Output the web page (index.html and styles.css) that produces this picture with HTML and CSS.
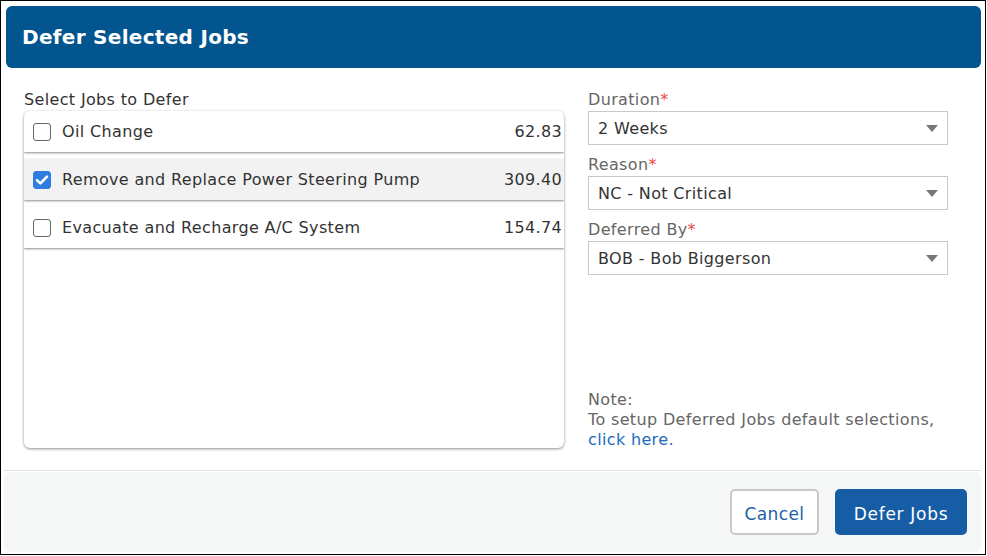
FILE: index.html
```html
<!DOCTYPE html>
<html>
<head>
<meta charset="utf-8">
<link rel="stylesheet" href="styles.css">
</head>
<body>
<div class="frame">
  <header class="dlg-header">
    <h1 class="dlg-title">Defer Selected Jobs</h1>
  </header>
  <main class="dlg-body">
    <section class="jobs-col">
      <div class="label">Select Jobs to Defer</div>
      <div class="jobs-card">
        <div class="job-row">
          <span class="cb"></span>
          <span class="job-name">Oil Change</span>
          <span class="job-amt">62.83</span>
        </div>
        <div class="job-row selected">
          <span class="cb checked">
            <svg viewBox="0 0 18 18" width="18" height="18"><path d="M4 9.2 L7.4 12.4 L14 5.6" fill="none" stroke="#fff" stroke-width="2.6" stroke-linecap="round" stroke-linejoin="round"/></svg>
          </span>
          <span class="job-name">Remove and Replace Power Steering Pump</span>
          <span class="job-amt">309.40</span>
        </div>
        <div class="job-row">
          <span class="cb"></span>
          <span class="job-name">Evacuate and Recharge A/C System</span>
          <span class="job-amt">154.74</span>
        </div>
      </div>
    </section>
    <section class="form-col">
      <div class="field">
        <div class="label">Duration<span class="req">*</span></div>
        <div class="select"><span>2 Weeks</span><span class="caret"></span></div>
      </div>
      <div class="field">
        <div class="label">Reason<span class="req">*</span></div>
        <div class="select"><span>NC - Not Critical</span><span class="caret"></span></div>
      </div>
      <div class="field">
        <div class="label">Deferred By<span class="req">*</span></div>
        <div class="select"><span>BOB - Bob Biggerson</span><span class="caret"></span></div>
      </div>
      <div class="note">
        Note:<br>
        To setup Deferred Jobs default selections,<br>
        <a class="link" href="#">click here.</a>
      </div>
    </section>
  </main>
  <footer class="dlg-footer">
    <div class="footer-inner">
      <button class="btn btn-cancel">Cancel</button>
      <button class="btn btn-primary">Defer Jobs</button>
    </div>
  </footer>
</div>
</body>
</html>
```

FILE: styles.css
```css
* { box-sizing: border-box; }
html, body { margin: 0; padding: 0; background: #fff; }
body {
  font-family: "DejaVu Sans", Verdana, sans-serif;
  font-size: 16px;
  letter-spacing: 0.35px;
  color: #333;
}
.frame {
  width: 986px;
  height: 555px;
  border: 1px solid #000;
  padding: 5px 4px 2px 3px;
  display: flex;
  flex-direction: column;
}
.dlg-header {
  margin-left: 2px;
  height: 62px;
  background: #03558f;
  border-radius: 6px;
  display: flex;
  align-items: center;
  padding-left: 16px;
}
.dlg-title {
  margin: 0;
  color: #fff;
  font-size: 20px;
  font-weight: bold;
  letter-spacing: 0.3px;
}
.dlg-body {
  display: grid;
  grid-template-columns: 540px 360px;
  column-gap: 24px;
  padding: 22px 0 22px 20px;
  border-bottom: 1px solid #e2e2e2;
}
.label {
  line-height: 20px;
  color: #666;
}
.jobs-col .label { color: #333; }
.jobs-card {
  margin-top: 1px;
  height: 337px;
  border-radius: 6px;
  background: #fff;
  box-shadow: 0 1px 3px rgba(0,0,0,0.45);
  overflow: hidden;
}
.job-row {
  height: 41px;
  margin-bottom: 7px;
  display: flex;
  align-items: center;
  padding: 0 2px 0 9px;
  background: #fff;
  box-shadow: 0 1px 2px rgba(0,0,0,0.45);
}
.job-row.selected { background: #f2f2f2; }
.cb {
  width: 18px;
  height: 18px;
  border: 1.5px solid #666;
  border-radius: 3px;
  flex: none;
  display: flex;
  align-items: center;
  justify-content: center;
}
.cb.checked {
  background: #2e7de1;
  border-color: #2e7de1;
}
.cb svg { display: block; flex: none; }
.job-name { margin-left: 11px; flex: 1; }
.job-amt { text-align: right; }
.form-col {
  display: flex;
  flex-direction: column;
}
.field { margin-bottom: 10px; }
.req { color: #e8474b; }
.select {
  margin-top: 1px;
  height: 34px;
  border: 1px solid #c8c8c8;
  display: flex;
  align-items: center;
  justify-content: space-between;
  padding: 0 9px 0 9px;
  color: #333;
}
.caret {
  width: 0;
  height: 0;
  border-left: 6px solid transparent;
  border-right: 6px solid transparent;
  border-top: 7px solid #777;
}
.note {
  margin-top: auto;
  margin-bottom: -2px;
  line-height: 20px;
  color: #666;
}
.link { color: #1d6bbd; text-decoration: none; }
.dlg-footer {
  padding-top: 1px;
  flex: 1;
  display: flex;
}
.footer-inner {
  flex: 1;
  background: #f5f6f6;
  border-radius: 6px;
  display: flex;
  justify-content: flex-end;
  align-items: flex-start;
  gap: 16px;
  padding: 17px 14px 0 0;
}
.btn {
  font-family: "DejaVu Sans", Verdana, sans-serif;
  font-size: 17px;
  letter-spacing: 0.4px;
  height: 46px;
  border-radius: 5px;
  cursor: pointer;
  padding: 3px 0 0 0;
}
.btn-cancel {
  width: 89px;
  background: #fff;
  border: 2px solid #c9c9c9;
  color: #1d5fa6;
}
.btn-primary {
  width: 132px;
  background: #165da6;
  border: none;
  color: #fff;
  letter-spacing: 0.7px;
}
```
